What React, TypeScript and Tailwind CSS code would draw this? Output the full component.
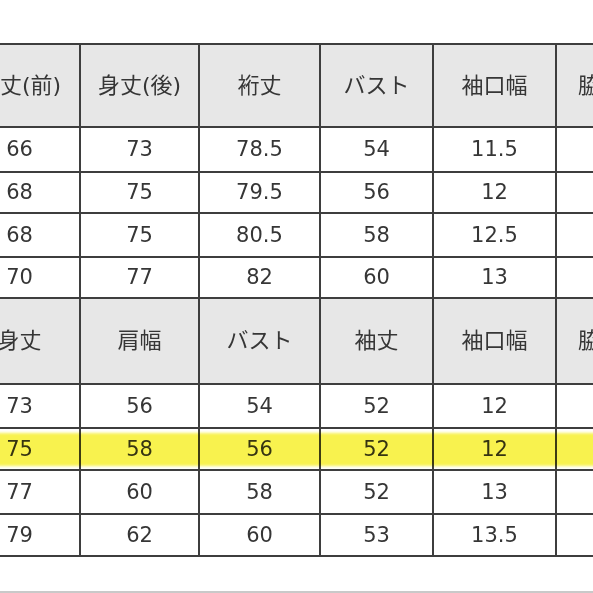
import React from "react";

const widths = ["w-[121px]", "w-[119px]", "w-[121px]", "w-[113px]", "w-[123px]", "w-[110px]"];

type Row = { h: string; header?: boolean; cells: string[] };

const rows: Row[] = [
  { h: "h-[83px]", header: true, cells: ["身丈(前)", "身丈(後)", "裄丈", "バスト", "袖口幅", "脇下幅"] },
  { h: "h-[45px]", cells: ["66", "73", "78.5", "54", "11.5", "47"] },
  { h: "h-[41px]", cells: ["68", "75", "79.5", "56", "12", "48"] },
  { h: "h-[44px]", cells: ["68", "75", "80.5", "58", "12.5", "49"] },
  { h: "h-[41px]", cells: ["70", "77", "82", "60", "13", "50"] },
  { h: "h-[86px]", header: true, cells: ["身丈", "肩幅", "バスト", "袖丈", "袖口幅", "脇下幅"] },
  { h: "h-[44px]", cells: ["73", "56", "54", "52", "12", "47"] },
  { h: "h-[42px]", cells: ["75", "58", "56", "52", "12", "48"] },
  { h: "h-[44px]", cells: ["77", "60", "58", "52", "13", "49"] },
  { h: "h-[42px]", cells: ["79", "62", "60", "53", "13.5", "50"] },
];

export default function App() {
  return (
    <div
      className="relative w-[593px] h-[593px] overflow-hidden bg-white text-[#363636]"
      style={{ fontFamily: '"DejaVu Sans", "Noto Sans CJK JP", sans-serif' }}
    >
      <div className="h-[43px]" />
      <div className="ml-[-40px] w-[707px] border-t-2 border-[#3e3e3e]">
        {rows.map((r, i) => (
          <div
            key={i}
            className={`flex ${r.h} border-b-2 border-[#3e3e3e] ${r.header ? "bg-[#e7e7e7]" : "bg-white"}`}
          >
            {r.cells.map((c, j) => (
              <div
                key={j}
                className={`${widths[j]} shrink-0 h-full border-r-2 border-[#3e3e3e] flex items-center justify-center ${
                  r.header ? "text-[22px]" : "text-[21px]"
                } leading-none`}
              >
                {c}
              </div>
            ))}
          </div>
        ))}
      </div>
      <div className="h-[34px]" />
      <div className="h-[2px] bg-[#c9c9c9]" />
      <div className="absolute left-[-12px] right-[-12px] top-[433px] h-[33px] bg-[#f8f24e] mix-blend-multiply blur-[1.5px]" />
    </div>
  );
}
